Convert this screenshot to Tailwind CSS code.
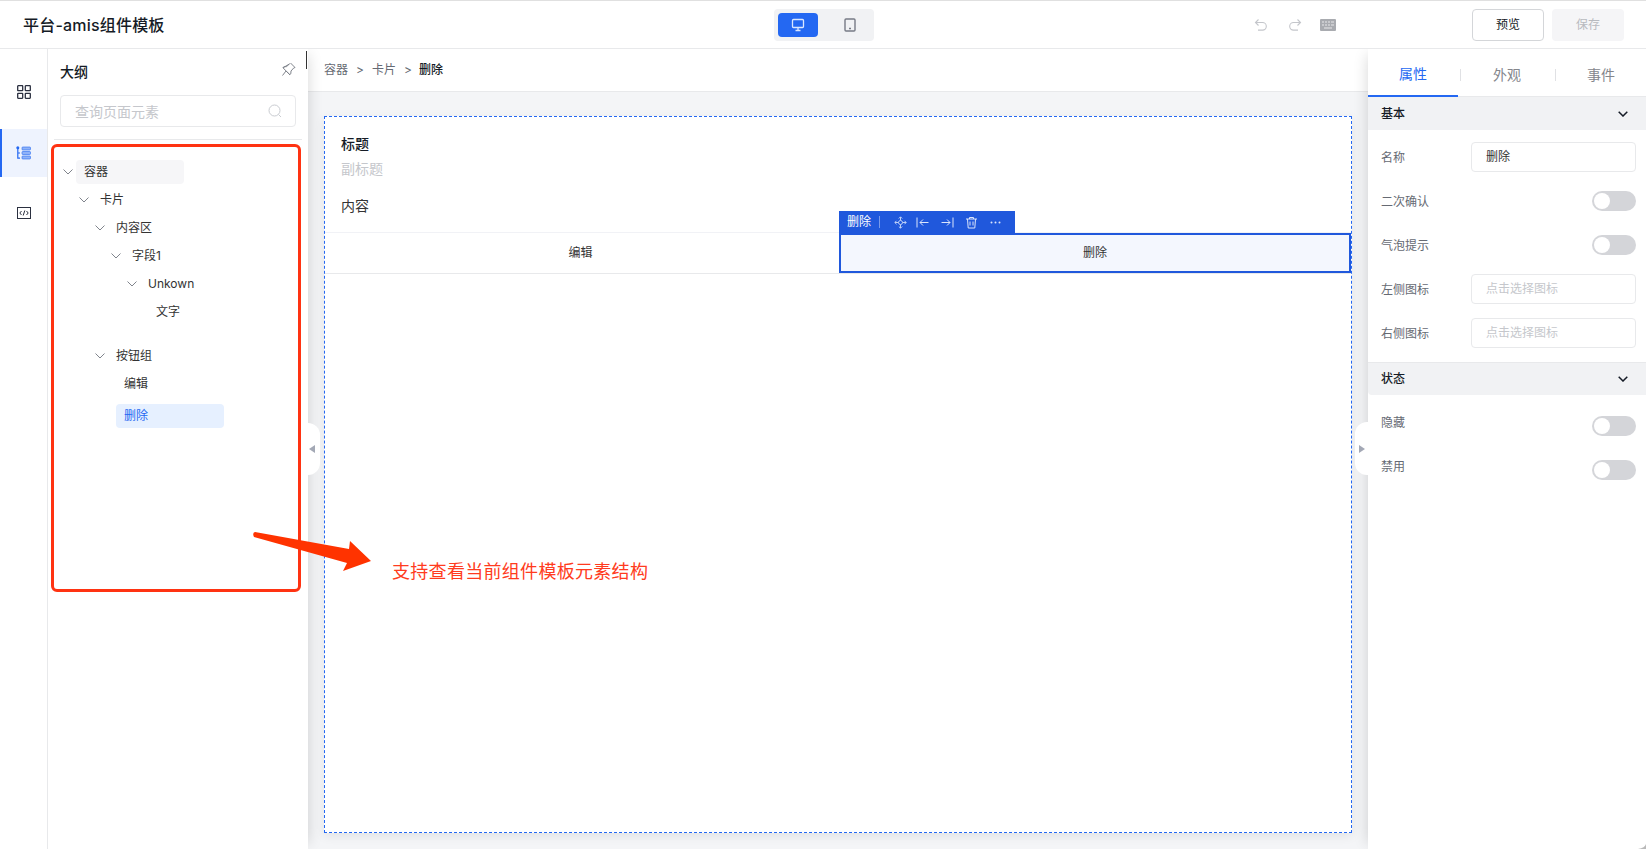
<!DOCTYPE html>
<html lang="zh-CN">
<head>
    <meta charset="UTF-8">
    <title>平台-amis组件模板</title>
    <script src="https://cdn.jsdelivr.net/npm/@tailwindcss/browser@4"></script>
</head>
<body class="bg-white text-[#151b26] font-['Inter','Noto_Sans_CJK_SC',sans-serif] overflow-hidden">
    <div class="relative w-[1646px] h-[849px] flex flex-col overflow-hidden border-t border-[#e0e0e0]">

        <!-- top bar -->
        <header class="relative z-20 h-[48px] shrink-0 flex items-center bg-white border-b border-[#e8e9eb]">
            <div class="w-[774px] pl-[23px] text-base font-medium tracking-[0.2px]">平台-amis组件模板</div>
            <div class="w-[100px] h-[32px] mt-[1px] rounded bg-[#f1f2f4] flex items-center pl-[4px]">
                <div class="w-[40px] h-[24px] rounded bg-[#2468f2] flex items-center justify-center">
                    <svg width="14" height="14" viewBox="0 0 14 14" fill="none" stroke="#dbe7ff" stroke-width="1.3"><rect x="1.5" y="1.5" width="11" height="8" rx="1"/><path d="M7 9.5v3M4.5 12.5h5"/></svg>
                </div>
                <div class="w-[40px] ml-[12px] flex items-center justify-center">
                    <svg width="12" height="14" viewBox="0 0 12 14" fill="none" stroke="#777b85" stroke-width="1.4"><rect x="1" y="1" width="10" height="12" rx="1"/><path d="M5 10.5h2" stroke-width="1.6"/></svg>
                </div>
            </div>
            <div class="flex-1 flex items-center justify-end pr-[22px]">
                <svg class="mr-[20px]" width="14" height="14" viewBox="0 0 14 14" fill="none" stroke="#c4c6cb" stroke-width="1.1"><path d="M4.5 1.5 1.5 4.5l3 3M1.5 4.5h7a3.7 3.7 0 0 1 0 7.6H4"/></svg>
                <svg class="mr-[18px]" width="14" height="14" viewBox="0 0 14 14" fill="none" stroke="#c4c6cb" stroke-width="1.1"><path d="m9.5 1.5 3 3-3 3M12.500 4.500h-7a3.700 3.700 0 0 0 0 7.600H10"/></svg>
                <svg class="mr-[136px]" width="16" height="12" viewBox="0 0 16 12"><rect width="16" height="12" rx="1" fill="#a9abb0"/><path d="M2 3h2M5 3h2M8 3h2M11 3h3M2 6h2M5 6h2M8 6h2M11 6h3M4 9h8" stroke="#e8e8ea" stroke-width="1"/></svg>
                <button class="w-[72px] h-[32px] mt-[1px] rounded border border-[#d4d6d9] bg-white text-xs">预览</button>
                <button class="w-[72px] h-[32px] mt-[1px] ml-[8px] rounded bg-[#f5f5f7] text-xs text-[#b8babf]">保存</button>
            </div>
        </header>

        <div class="flex-1 flex min-h-0">
            <!-- icon rail -->
            <nav class="relative z-20 w-[48px] shrink-0 bg-white border-r border-[#e8e9eb] pt-[20px]">
                <div class="h-[48px] flex items-start justify-center pt-[16px]">
                    <svg width="14" height="14" viewBox="0 0 14 14" fill="none" stroke="#2b3040" stroke-width="1.300"><rect x=".7" y=".7" width="5" height="5" rx=".5"/><rect x="8.300" y=".7" width="5" height="5" rx=".5"/><rect x=".7" y="8.300" width="5" height="5" rx=".5"/><rect x="8.300" y="8.300" width="5" height="5" rx=".5"/></svg>
                </div>
                <div class="h-[48px] mt-[12px] bg-[#eef3fe] border-l-2 border-[#2468f2] flex items-center justify-center pr-[2px]">
                    <svg width="15" height="14" viewBox="0 0 15 14" fill="none"><circle cx="1.800" cy="1.800" r="1.500" fill="#2468f2"/><path d="M1.800 2v10.200H4M1.800 7H4" stroke="#2468f2" stroke-width="1.200"/><rect x="6" y="1" width="8.500" height="3" rx=".8" fill="#8fb2f8" stroke="#2468f2" stroke-width=".6"/><rect x="6" y="5.500" width="8.500" height="3" rx=".8" fill="#8fb2f8" stroke="#2468f2" stroke-width=".6"/><rect x="6" y="10" width="8.500" height="3" rx=".8" fill="#8fb2f8" stroke="#2468f2" stroke-width=".6"/></svg>
                </div>
                <div class="h-[48px] mt-[12px] flex items-start justify-center pt-[18px]">
                    <svg width="14" height="12" viewBox="0 0 14 12" fill="none" stroke="#2b3040" stroke-width="1"><rect x=".5" y=".5" width="13" height="11"/><path d="M4.500 4 2.800 6l1.700 2M9.500 4l1.700 2-1.700 2M7.800 3.500l-1.600 5"/></svg>
                </div>
            </nav>

            <!-- outline panel -->
            <aside class="relative z-10 w-[260px] shrink-0 bg-white shadow-[6px_0_14px_-6px_rgba(0,0,0,0.16)]">
                <div class="h-[46px] flex items-center justify-between pl-[12px] pr-[12px]">
                    <span class="text-sm font-medium">大纲</span>
                    <svg class="-mt-[5px]" width="15" height="15" viewBox="0 0 15 15" fill="none" stroke="#80848c" stroke-width="1"><path d="M9.500 1 14 5.500l-1.300.5-2.700 3-.2 2.800-1 .7L5 9l-3.500 4.500M2 5.800l.7-1 2.800-.2 3-2.700z"/><path d="M2 5.800 9 13"/></svg>
                </div>
                <div class="mx-[12px] h-[32px] rounded border border-[#e8e9eb] flex items-center justify-between pl-[14px] pr-[13px] text-sm text-[#c5c7cc]">
                    <span class="mt-[1px]">查询页面元素</span>
                    <svg width="14" height="14" viewBox="0 0 14 14" fill="none" stroke="#c9ccd1" stroke-width="1"><circle cx="6.500" cy="6.500" r="5.500"/><path d="m10.500 10.500 2.500 2.500"/></svg>
                </div>
                <div class="mx-[6px] mt-[12px] border-t border-[#e8e9eb]"></div>

                <div class="pt-[20px] text-xs text-[#333]">
                    <div class="h-[24px] mb-[4px] flex items-center pl-[15px]">
                        <svg class="w-[10px] h-[6px] mr-[3px]" viewBox="0 0 10 6" fill="none" stroke="#80848c"><path d="m.5.5 4.500 4.500L9.500.5"/></svg>
                        <div class="w-[108px] h-[24px] rounded-sm bg-[#f6f6f8] pl-[8px] flex items-center">容器</div>
                    </div>
                    <div class="h-[24px] mb-[4px] flex items-center pl-[31px]">
                        <svg class="w-[10px] h-[6px] mr-[11px]" viewBox="0 0 10 6" fill="none" stroke="#80848c"><path d="m.5.5 4.500 4.500L9.500.5"/></svg>卡片
                    </div>
                    <div class="h-[24px] mb-[4px] flex items-center pl-[47px]">
                        <svg class="w-[10px] h-[6px] mr-[11px]" viewBox="0 0 10 6" fill="none" stroke="#80848c"><path d="m.5.5 4.500 4.500L9.500.5"/></svg>内容区
                    </div>
                    <div class="h-[24px] mb-[4px] flex items-center pl-[63px]">
                        <svg class="w-[10px] h-[6px] mr-[11px]" viewBox="0 0 10 6" fill="none" stroke="#80848c"><path d="m.5.5 4.500 4.500L9.500.5"/></svg>字段1
                    </div>
                    <div class="h-[24px] mb-[4px] flex items-center pl-[79px]">
                        <svg class="w-[10px] h-[6px] mr-[11px]" viewBox="0 0 10 6" fill="none" stroke="#80848c"><path d="m.5.5 4.500 4.500L9.500.5"/></svg>Unkown
                    </div>
                    <div class="h-[24px] mb-[20px] flex items-center pl-[108px]">文字</div>
                    <div class="h-[24px] mb-[4px] flex items-center pl-[47px]">
                        <svg class="w-[10px] h-[6px] mr-[11px]" viewBox="0 0 10 6" fill="none" stroke="#80848c"><path d="m.5.5 4.500 4.500L9.500.5"/></svg>按钮组
                    </div>
                    <div class="h-[24px] mb-[8px] flex items-center pl-[76px]">编辑</div>
                    <div class="h-[24px] ml-[68px] w-[108px] rounded-sm bg-[#e6f0ff] text-[#2468f2] pl-[8px] flex items-center">删除</div>
                </div>
            </aside>

            <!-- canvas column -->
            <main class="relative flex-1 min-w-0 flex flex-col bg-[#f4f5f7]">
                <div class="h-[43px] shrink-0 bg-white border-b border-[#e8e9eb] pl-[16px] flex items-center text-xs text-[#666a73]">
                    <span>容器</span><span class="mx-[8px]">&gt;</span><span>卡片</span><span class="mx-[8px]">&gt;</span><span class="-ml-[1px] font-medium text-[#151b26]">删除</span>
                </div>
                <div class="ml-[16px] mr-[16px] mt-[24px] h-[717px] bg-white border border-dashed border-[#2468f2] shadow-[0_3px_10px_rgba(0,0,0,0.08)]">
                    <div class="h-[116px] pl-[16px] pt-[16px] border-b border-[#f1f2f6]">
                        <div class="text-sm font-medium leading-[22px]">标题</div>
                        <div class="text-sm leading-[22px] mt-[3px] text-[#c5c7cc]">副标题</div>
                        <div class="text-sm leading-[22px] mt-[15px] text-[#333]">内容</div>
                    </div>
                    <div class="flex h-[41px] border-b border-[#e8e9eb] text-xs text-[#333]">
                        <div class="w-[514px] pr-[3px] flex items-center justify-center">编辑</div>
                        <div class="relative flex-1 bg-[#f4f7fe] border-2 border-[#2058dc] flex items-center justify-center">
                            删除
                            <div class="absolute -left-[2px] -top-[24px] w-[176px] h-[22px] bg-[#2058dc] flex items-center pl-[8px] text-white">
                                <span>删除</span>
                                <span class="ml-[8px] w-px h-[12px] bg-white/40"></span>
                                <svg class="ml-[14px]" width="13" height="13" viewBox="0 0 13 13" fill="none" stroke="#bccff7" stroke-width="1"><path d="M4.800 2.500 6.500.8l1.700 1.700M4.800 10.500l1.700 1.700 1.700-1.700M2.500 4.800.8 6.500l1.700 1.700M10.500 4.800l1.700 1.700-1.700 1.700"/><path d="M6.500 1v3.500M6.500 8.500V12M1 6.500h3.500M8.500 6.500H12"/><circle cx="6.500" cy="6.500" r="2"/></svg>
                                <svg class="ml-[9px]" width="13" height="11" viewBox="0 0 13 11" fill="none" stroke="#dbe5fb" stroke-width="1"><path d="M1 .5v10M12.500 5.500H4M7 2.500l-3 3 3 3"/></svg>
                                <svg class="ml-[12px]" width="13" height="11" viewBox="0 0 13 11" fill="none" stroke="#dbe5fb" stroke-width="1"><path d="M12 .5v10M.5 5.500H9M6 2.500l3 3-3 3"/></svg>
                                <svg class="ml-[11px]" width="13" height="13" viewBox="0 0 13 13" fill="none" stroke="#dbe5fb" stroke-width="1"><path d="M1 3h11M4.500 3V1.500h4V3M2.500 3l.7 9h6.600l.7-9M5 5.500v4M8 5.500v4"/></svg>
                                <svg class="ml-[12px]" width="11" height="3" viewBox="0 0 11 3" fill="#dbe5fb"><circle cx="1.500" cy="1.500" r="1"/><circle cx="5.500" cy="1.500" r="1"/><circle cx="9.500" cy="1.500" r="1"/></svg>
                            </div>
                        </div>
                    </div>
                </div>
            </main>

            <!-- properties panel -->
            <aside class="relative z-10 w-[278px] shrink-0 bg-white shadow-[-6px_0_14px_-6px_rgba(0,0,0,0.16)]">
                <div class="flex h-[48px] text-sm text-[#84868c] border-b border-[#e8e9eb]">
                    <div class="w-[90px] -mb-px border-b-2 border-[#2468f2] text-[#2468f2] flex items-center justify-center pt-[3px]">属性</div>
                    <div class="w-[94px] relative flex items-center justify-center pt-[4px] pl-[4px]">外观<span class="absolute left-[2px] top-[20px] w-px h-[12px] bg-[#e0e1e4]"></span></div>
                    <div class="w-[94px] relative flex items-center justify-center pt-[4px] pl-[4px]">事件<span class="absolute left-[3px] top-[20px] w-px h-[12px] bg-[#e0e1e4]"></span></div>
                </div>

                <div class="h-[33px] bg-[#f1f2f4] flex items-center justify-between pl-[13px] pr-[18px] text-xs font-medium">
                    <span>基本</span>
                    <svg width="10" height="6" viewBox="0 0 10 6" fill="none" stroke="#151b26" stroke-width="1.500"><path d="m.7.7 4.300 4.300L9.300.7"/></svg>
                </div>
                <div class="pl-[13px] pr-[10px] pt-[12px] pb-[14px] border-b border-[#e8e9eb] flex flex-col gap-[14px] text-xs text-[#666a73]">
                    <div class="h-[30px] flex items-center justify-between">
                        <span class="mt-[2px]">名称</span>
                        <div class="w-[165px] h-[30px] rounded border border-[#e8e9eb] pl-[14px] flex items-center text-[#333]">删除</div>
                    </div>
                    <div class="h-[30px] flex items-center justify-between">
                        <span class="mt-[1px]">二次确认</span>
                        <div class="w-[44px] h-[20px] rounded-full bg-[#d4d5d9] p-[2px]"><div class="w-[16px] h-[16px] rounded-full bg-white"></div></div>
                    </div>
                    <div class="h-[30px] flex items-center justify-between">
                        <span class="mt-[1px]">气泡提示</span>
                        <div class="w-[44px] h-[20px] rounded-full bg-[#d4d5d9] p-[2px]"><div class="w-[16px] h-[16px] rounded-full bg-white"></div></div>
                    </div>
                    <div class="h-[30px] flex items-center justify-between">
                        <span class="mt-[1px]">左侧图标</span>
                        <div class="w-[165px] h-[30px] rounded border border-[#e8e9eb] pl-[14px] flex items-center text-[#c5c7cc]">点击选择图标</div>
                    </div>
                    <div class="h-[30px] flex items-center justify-between">
                        <span class="mt-[1px]">右侧图标</span>
                        <div class="w-[165px] h-[30px] rounded border border-[#e8e9eb] pl-[14px] flex items-center text-[#c5c7cc]">点击选择图标</div>
                    </div>
                </div>

                <div class="h-[32px] bg-[#f1f2f4] rounded-bl flex items-center justify-between pl-[13px] pr-[18px] text-xs font-medium">
                    <span>状态</span>
                    <svg width="10" height="6" viewBox="0 0 10 6" fill="none" stroke="#151b26" stroke-width="1.500"><path d="m.7.7 4.300 4.300L9.300.7"/></svg>
                </div>
                <div class="pl-[13px] pr-[10px] pt-[21px] flex flex-col gap-[24px] text-xs text-[#666a73]">
                    <div class="h-[20px] flex items-start justify-between">
                        <span class="-mt-[1px]">隐藏</span>
                        <div class="w-[44px] h-[20px] rounded-full bg-[#d4d5d9] p-[2px]"><div class="w-[16px] h-[16px] rounded-full bg-white"></div></div>
                    </div>
                    <div class="h-[20px] flex items-start justify-between">
                        <span class="-mt-[1px]">禁用</span>
                        <div class="w-[44px] h-[20px] rounded-full bg-[#d4d5d9] p-[2px]"><div class="w-[16px] h-[16px] rounded-full bg-white"></div></div>
                    </div>
                </div>
            </aside>
        </div>

        <!-- scrollbar tick and panel collapse handles -->
        <div class="absolute z-30 left-[306px] top-[50px] w-px h-[18px] bg-[#333]"></div>
        <div class="absolute z-30 left-[308px] top-[422px] w-[12px] h-[52px] bg-white rounded-r-xl flex items-center pl-[1px]">
            <span class="w-0 h-0 border-y-[4px] border-y-transparent border-r-[6px] border-r-[#a3a8b5]"></span>
        </div>
        <div class="absolute z-30 left-[1355px] top-[421px] w-[13px] h-[53px] bg-white rounded-l-xl flex items-center pl-[4px]">
            <span class="w-0 h-0 border-y-[4px] border-y-transparent border-l-[6px] border-l-[#a3a8b5]"></span>
        </div>

        <!-- red annotation over the screenshot -->
        <div class="absolute z-30 left-[51px] top-[143px] w-[250px] h-[448px] border-[3px] border-[#ff3312] rounded-md"></div>
        <svg class="absolute z-30 left-[250px] top-[527px]" width="125" height="46" viewBox="250 528 125 46"><path d="M255 532 349 549 350 541 371 561 343 571 347 563 254 537Q252 533 255 532Z" fill="#ff3300"/></svg>
        <div class="absolute z-30 left-[392px] top-[558px] text-lg leading-[26px] tracking-[0.3px] text-[#ff3b20]">支持查看当前组件模板元素结构</div>

        <!-- window corner -->
        <svg class="absolute z-30 right-0 bottom-0" width="8" height="5" viewBox="0 0 8 5"><path d="M8 0Q7 4 0 5H8Z" fill="#b9b9b9"/></svg>
    </div>
</body>
</html>
